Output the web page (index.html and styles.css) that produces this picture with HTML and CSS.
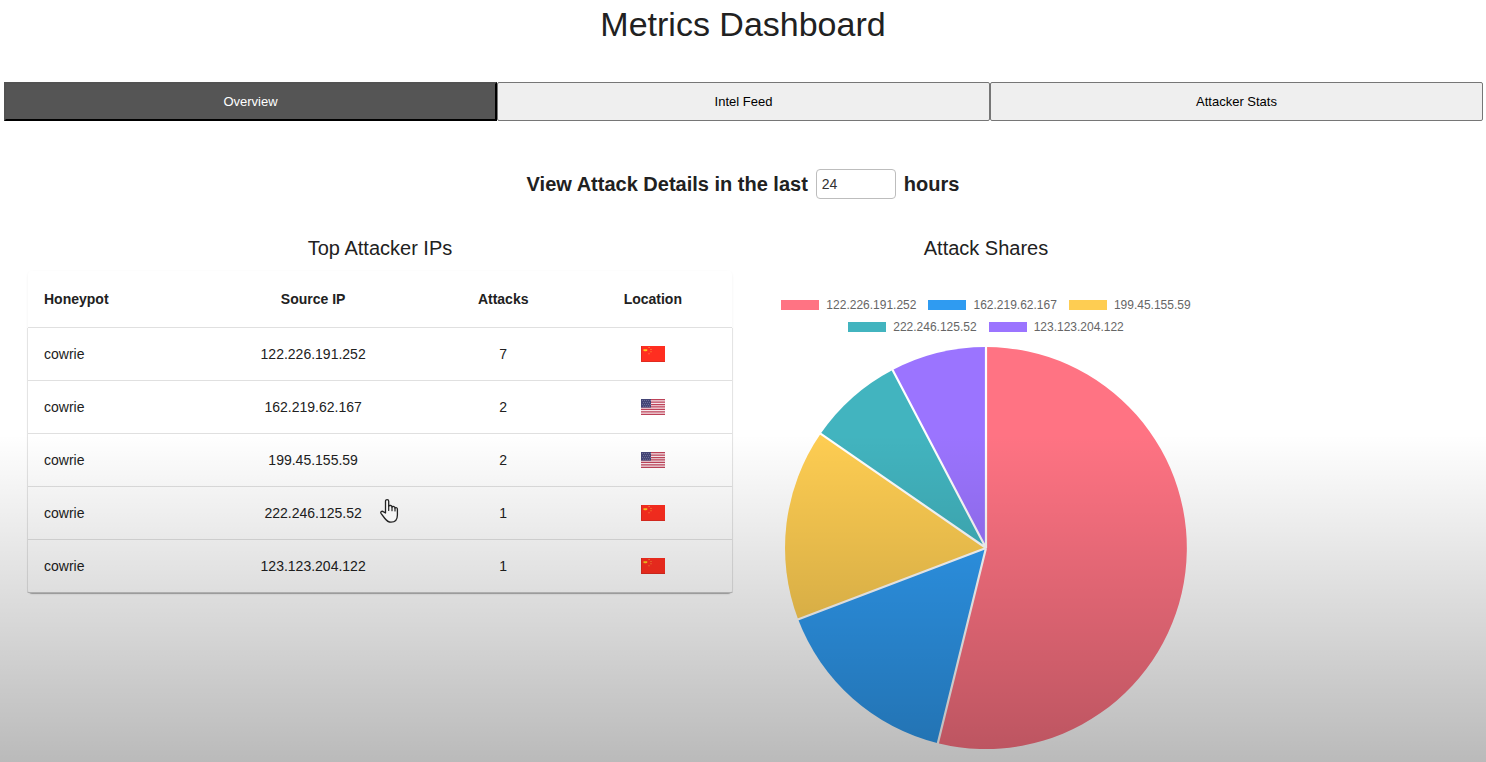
FILE: index.html
```html
<!DOCTYPE html>
<html lang="en">
<head>
<meta charset="utf-8">
<title>Metrics Dashboard</title>
<link rel="stylesheet" href="styles.css">
</head>
<body>
<svg class="defs" aria-hidden="true">
  <symbol id="flag-cn" viewBox="0 0 24 16">
    <rect width="24" height="16" fill="#ff2e20"/>
    <path d="M.5 0V15.500H24" fill="none" stroke="#e02b20"/>
    <path d="M2.500 3.200H6.200V4.300L5.200 5.200H3.500L2.500 4.300Z" fill="#ffc81f"/>
    <path d="M7.500 1h1.200v1H7.500zM9.500 3h1v1h-1zM9.500 5.200h1v1h-1zM7.500 7.200h1v1h-1z" fill="#ff9a3a"/>
  </symbol>
  <symbol id="flag-us" viewBox="0 0 24 16">
    <rect width="24" height="16" fill="#f6e6ea"/>
    <path d="M0 .6h24M0 3.060h24M0 5.520h24M0 7.980h24M0 10.440h24M0 12.900h24M0 15.400h24" stroke="#bd4359" stroke-width="1.230"/>
    <rect width="10" height="8.600" fill="#444576"/>
    <path d="M1 1.500h9M2 3.500h8M1 5.500h9M2 7.300h8" stroke="#9493b4" stroke-width=".7" stroke-dasharray=".8 1.200"/>
  </symbol>
</svg>

<header class="header">
  <h1 class="title">Metrics Dashboard</h1>
</header>

<nav class="tabs">
  <button type="button" class="tab tab-active">Overview</button>
  <button type="button" class="tab">Intel Feed</button>
  <button type="button" class="tab">Attacker Stats</button>
</nav>

<main>
  <form class="period">
    <label for="hours">View Attack Details in the last</label>
    <input id="hours" class="hours" type="text" value="24">
    <span>hours</span>
  </form>

  <div class="panels">
    <section>
      <h2 class="subtitle">Top Attacker IPs</h2>
      <div class="card">
        <table class="table">
          <colgroup><col class="col-pot"><col class="col-ip"><col class="col-count"><col class="col-flag"></colgroup>
          <thead>
            <tr><th>Honeypot</th><th>Source IP</th><th>Attacks</th><th>Location</th></tr>
          </thead>
          <tbody>
            <tr><td>cowrie</td><td>122.226.191.252</td><td>7</td><td><svg class="flag" role="img" aria-label="China"><use href="#flag-cn"/></svg></td></tr>
            <tr><td>cowrie</td><td>162.219.62.167</td><td>2</td><td><svg class="flag" role="img" aria-label="United States"><use href="#flag-us"/></svg></td></tr>
            <tr><td>cowrie</td><td>199.45.155.59</td><td>2</td><td><svg class="flag" role="img" aria-label="United States"><use href="#flag-us"/></svg></td></tr>
            <tr><td>cowrie</td><td>222.246.125.52</td><td>1</td><td><svg class="flag" role="img" aria-label="China"><use href="#flag-cn"/></svg></td></tr>
            <tr><td>cowrie</td><td>123.123.204.122</td><td>1</td><td><svg class="flag" role="img" aria-label="China"><use href="#flag-cn"/></svg></td></tr>
          </tbody>
        </table>
      </div>
    </section>

    <section class="shares">
      <h2 class="subtitle">Attack Shares</h2>
      <ul class="legend">
        <li class="key"><span class="swatch red"></span>122.226.191.252</li>
        <li class="key"><span class="swatch blue"></span>162.219.62.167</li>
        <li class="key"><span class="swatch yellow"></span>199.45.155.59</li>
        <li class="key"><span class="swatch teal"></span>222.246.125.52</li>
        <li class="key"><span class="swatch purple"></span>123.123.204.122</li>
      </ul>
      <svg class="pie" viewBox="0 0 404 404" role="img" aria-label="Attack shares by source IP">
        <path fill="#ff7383" d="M202 202V1A201 201 0 1 1 153.900 397.200Z"/>
        <path fill="#2f9bf1" d="M202 202L153.900 397.200A201 201 0 0 1 14.100 273.300Z"/>
        <path fill="#fecd52" d="M202 202L14.100 273.300A201 201 0 0 1 36.600 87.800Z"/>
        <path fill="#42b4bf" d="M202 202L36.600 87.800A201 201 0 0 1 108.600 24Z"/>
        <path fill="#9b74ff" d="M202 202L108.600 24A201 201 0 0 1 202 1Z"/>
        <path fill="none" stroke="#fff" stroke-width="2.200" d="M202 202V0M202 202L153.600 398.200M202 202L13.200 273.700M202 202L35.800 87.200M202 202L108.100 23.100"/>
      </svg>
    </section>
  </div>
</main>

<div class="shade"></div>
<svg class="pointer" viewBox="0 0 20 26" aria-hidden="true">
  <path d="M5.500 15V3.200C5.500 1 8.700 1 8.700 3.200V8.200C9.500 7 12 7.300 12 9C13 7.900 15 8.500 15 10C16 9.200 17.400 9.800 17.400 11.300V17C17.400 21.500 15 24.200 11 24.200C7.500 24.200 6 22 4.500 20L1 15.300C.2 13.900 1.900 12.700 3.200 13.600Z" fill="#f4f4f4" stroke="#222" stroke-width="1.300" stroke-linejoin="round"/>
  <path d="M8.700 8V12.500M12 9V12.700M15 10V13" stroke="#222" stroke-width="1.200" fill="none" stroke-linecap="round"/>
</svg>
</body>
</html>
```
FILE: styles.css
```css
* {
  box-sizing: border-box;
}

body {
  position: relative;
  min-height: 100vh;
  margin: 0;
  background: #fff;
  color: #212121;
  font-family: "Liberation Sans", Arial, sans-serif;
  font-size: 14px;
}

.defs {
  display: none;
}

.header {
  padding: 3px 0 37px;
  text-align: center;
}

.title {
  margin: 0;
  font-size: 34px;
  font-weight: 400;
  line-height: 42px;
}

.tabs {
  display: grid;
  grid-template-columns: repeat(3, 1fr);
  padding: 0 3px 0 4px;
}

.tab {
  height: 39px;
  padding: 0;
  border: 1px solid #767676;
  border-radius: 2px;
  background: #efefef;
  color: #000;
  font-family: inherit;
  font-size: 13px;
}

.tab-active {
  border: 2px solid #000;
  border-top-color: #525252;
  border-left-color: #525252;
  border-radius: 0;
  background: #555;
  color: #fff;
}

.period {
  display: flex;
  align-items: center;
  justify-content: center;
  gap: 8px;
  padding: 48px 0 33px;
  font-size: 20px;
  font-weight: 700;
  line-height: 30px;
}

.hours {
  width: 80px;
  height: 30px;
  padding: 0 5px;
  border: 1px solid #bdbdbd;
  border-radius: 4px;
  background: #fff;
  color: #333;
  font-family: inherit;
  font-size: 14px;
}

.panels {
  display: grid;
  grid-template-columns: 704fr 508fr 246fr;
  padding-left: 28px;
}

.subtitle {
  margin: 0 0 7px;
  font-size: 20px;
  font-weight: 400;
  line-height: 32px;
  text-align: center;
}

.card {
  border-radius: 4px;
  box-shadow: 0 2px 1px -1px rgba(0, 0, 0, 0.3), 0 1px 3px rgba(0, 0, 0, 0.06);
}

.table {
  width: 100%;
  table-layout: fixed;
  border-spacing: 0;
}

.col-pot {
  width: 23.5%;
}

.col-ip {
  width: 34%;
}

.col-count {
  width: 20%;
}

.col-flag {
  width: 22.5%;
}

.table th,
.table td {
  padding: 16px;
  border-bottom: 1px solid #e0e0e0;
  line-height: 20px;
  text-align: center;
}

.table th {
  line-height: 24px;
}

.table th:first-child,
.table td:first-child {
  text-align: left;
}

.table tbody td:first-child {
  box-shadow: -1px 0 #e4e4e4;
}

.table tbody td:last-child {
  box-shadow: 1px 0 #e4e4e4;
}

.table tbody tr:last-child td {
  border-bottom-color: #c8c8c8;
}

.flag {
  display: block;
  width: 24px;
  height: 16px;
  margin: 0 auto;
}

.shares {
  display: flex;
  flex-direction: column;
  align-items: stretch;
}

.legend {
  display: flex;
  flex-wrap: wrap;
  justify-content: center;
  align-self: center;
  gap: 0 12px;
  max-width: 430px;
  margin: 0;
  padding: 23px 0 8px;
  list-style: none;
}

.key {
  display: flex;
  align-items: center;
  gap: 7px;
  color: #666;
  font-size: 12px;
  line-height: 22px;
}

.swatch {
  width: 38px;
  height: 10px;
}

.red {
  background: #ff7383;
}

.blue {
  background: #2f9bf1;
}

.yellow {
  background: #fecd52;
}

.teal {
  background: #42b4bf;
}

.purple {
  background: #9b74ff;
}

.pie {
  display: block;
  align-self: center;
  width: 80%;
  max-width: 404px;
}

.shade {
  position: absolute;
  inset: 0;
  background: linear-gradient(transparent 57%, rgba(0, 0, 0, 0.27));
  pointer-events: none;
}

.pointer {
  position: absolute;
  top: 498px;
  left: 380px;
  width: 20px;
  height: 26px;
  pointer-events: none;
}
```
